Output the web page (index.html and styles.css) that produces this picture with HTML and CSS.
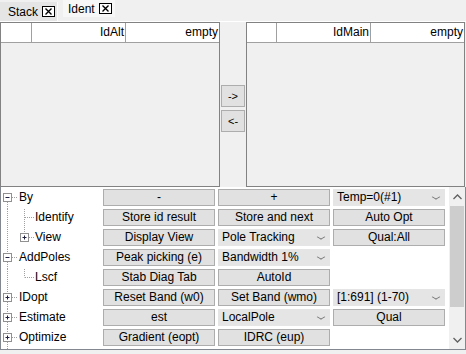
FILE: index.html
```html
<!DOCTYPE html>
<html lang="en">
<head>
  <meta charset="UTF-8">
  <title>Ident</title>
  <link rel="stylesheet" href="styles.css">
</head>
<body>
  <div class="tabs">
    <div class="tab stack">Stack
      <svg class="close" width="13" height="11" viewBox="0 0 13 11"><rect x="0.5" y="0.5" width="12" height="10" fill="#fff" stroke="#000"/><path d="M3.5 2.5 L9.5 8.5 M9.5 2.5 L3.5 8.5" stroke="#000" stroke-width="1.4"/></svg>
    </div>
    <div class="tab active">Ident
      <svg class="close" width="13" height="11" viewBox="0 0 13 11"><rect x="0.5" y="0.5" width="12" height="10" fill="#fff" stroke="#000"/><path d="M3.5 2.5 L9.5 8.5 M9.5 2.5 L3.5 8.5" stroke="#000" stroke-width="1.4"/></svg>
    </div>
  </div>

  <div class="lists">
    <div class="grid left">
      <div class="head">
        <div class="c0"></div>
        <div class="c1">IdAlt</div>
        <div class="c2">empty</div>
      </div>
    </div>
    <div class="mover">
      <button class="mv">-&gt;</button>
      <button class="mv">&lt;-</button>
    </div>
    <div class="grid right">
      <div class="head">
        <div class="c0"></div>
        <div class="c1">IdMain</div>
        <div class="c2">empty</div>
      </div>
    </div>
  </div>

  <div class="panel">
    <div class="rows">
      <!-- By -->
      <div class="node">
        <svg width="99" height="20"><g class="dots"><path d="M6.5 13V20 M11 8.5H17"/></g><rect x="2.5" y="4.5" width="8" height="8"/><path class="sign" d="M4.5 8.5H8.5"/></svg>
        <span class="lbl">By</span>
      </div>
      <div class="btn">-</div>
      <div class="btn">+</div>
      <div class="combo">Temp=0(#1)<i></i></div>

      <!-- Identify -->
      <div class="node">
        <svg width="99" height="20"><g class="dots"><path d="M6.5 0V20 M23.5 0V20 M24 8.5H33"/></g></svg>
        <span class="lbl sub">Identify</span>
      </div>
      <div class="btn">Store id result</div>
      <div class="btn">Store and next</div>
      <div class="btn">Auto Opt</div>

      <!-- View -->
      <div class="node">
        <svg width="99" height="20"><g class="dots"><path d="M6.5 0V20 M23.5 0V4 M28 8.5H33"/></g><rect x="19.5" y="4.5" width="8" height="8"/><path class="sign" d="M21.5 8.5H25.5 M23.5 6.5V10.5"/></svg>
        <span class="lbl sub">View</span>
      </div>
      <div class="btn">Display View</div>
      <div class="combo">Pole Tracking<i></i></div>
      <div class="btn">Qual:All</div>

      <!-- AddPoles -->
      <div class="node">
        <svg width="99" height="20"><g class="dots"><path d="M6.5 0V4 M6.5 13V20 M11 8.5H17"/></g><rect x="2.5" y="4.5" width="8" height="8"/><path class="sign" d="M4.5 8.5H8.5"/></svg>
        <span class="lbl">AddPoles</span>
      </div>
      <div class="btn">Peak picking (e)</div>
      <div class="combo">Bandwidth 1%<i></i></div>
      <div></div>

      <!-- Lscf -->
      <div class="node">
        <svg width="99" height="20"><g class="dots"><path d="M6.5 0V20 M23.5 0V8.5 M24 8.5H33"/></g></svg>
        <span class="lbl sub">Lscf</span>
      </div>
      <div class="btn">Stab Diag Tab</div>
      <div class="btn">AutoId</div>
      <div></div>

      <!-- IDopt -->
      <div class="node">
        <svg width="99" height="20"><g class="dots"><path d="M6.5 0V4 M6.5 13V20 M11 8.5H17"/></g><rect x="2.5" y="4.5" width="8" height="8"/><path class="sign" d="M4.5 8.5H8.5 M6.5 6.5V10.5"/></svg>
        <span class="lbl">IDopt</span>
      </div>
      <div class="btn">Reset Band (w0)</div>
      <div class="btn">Set Band (wmo)</div>
      <div class="combo">[1:691] (1-70)<i></i></div>

      <!-- Estimate -->
      <div class="node">
        <svg width="99" height="20"><g class="dots"><path d="M6.5 0V4 M6.5 13V20 M11 8.5H17"/></g><rect x="2.5" y="4.5" width="8" height="8"/><path class="sign" d="M4.5 8.5H8.5 M6.5 6.5V10.5"/></svg>
        <span class="lbl">Estimate</span>
      </div>
      <div class="btn">est</div>
      <div class="combo">LocalPole<i></i></div>
      <div class="btn">Qual</div>

      <!-- Optimize -->
      <div class="node">
        <svg width="99" height="20"><g class="dots"><path d="M6.5 0V4 M6.5 13V20 M11 8.5H17"/></g><rect x="2.5" y="4.5" width="8" height="8"/><path class="sign" d="M4.5 8.5H8.5 M6.5 6.5V10.5"/></svg>
        <span class="lbl">Optimize</span>
      </div>
      <div class="btn">Gradient (eopt)</div>
      <div class="btn">IDRC (eup)</div>
      <div></div>
    </div>

    <div class="vscroll">
      <div class="arrow"><svg width="9" height="6"><path d="M0.5 5L4.5 1L8.5 5" fill="none" stroke="#606060" stroke-width="1.3"/></svg></div>
      <div class="track"><div class="thumb"></div></div>
      <div class="arrow"><svg width="9" height="6"><path d="M0.5 1L4.5 5L8.5 1" fill="none" stroke="#606060" stroke-width="1.3"/></svg></div>
    </div>
  </div>
</body>
</html>
```

FILE: styles.css
```css
* {
  box-sizing: border-box;
}
body {
  margin: 0;
  width: 466px;
  height: 354px;
  overflow: hidden;
  background: #f0f0f0;
  font-family: "Liberation Sans", Arial, sans-serif;
  font-size: 12px;
  color: #000;
}

/* tab strip */
.tabs {
  display: flex;
  align-items: flex-start;
  height: 22px;
  border-bottom: 1px solid #fff;
}
.tab {
  display: flex;
  align-items: center;
  gap: 4px;
}
.tab.stack {
  margin-top: 2px;
  height: 19px;
  width: 58px;
  padding-left: 8px;
  background: #e5e5e5;
  border-right: 1px solid #fafafa;
}
.tab.active {
  margin-left: 5px;
  height: 17px;
  width: 52px;
  padding-left: 5px;
  background: #f7f7f7;
}
.close {
  display: block;
}

/* the two lists */
.lists {
  display: flex;
  height: 165px;
}
.grid {
  border: 1px solid #828282;
  background: #f0f0f0;
}
.grid.left {
  width: 220px;
}
.grid.right {
  width: 219px;
}
.head {
  display: flex;
  height: 20px;
  background: #fff;
  border-bottom: 1px solid #a0a0a0;
}
.head div {
  text-align: right;
  padding-right: 1px;
  line-height: 19px;
  border-right: 1px solid #a0a0a0;
}
.grid.left .c0 { width: 31px; }
.grid.right .c0 { width: 30px; }
.head .c1 { width: 94px; }
.head .c2 { flex: 1; border-right: none; }

.mover {
  width: 26px;
  padding: 63px 0 0 1px;
  display: flex;
  flex-direction: column;
  gap: 3px;
}
.mv {
  width: 24px;
  height: 22px;
  padding: 0;
  background: #e1e1e1;
  border: 1px solid #adadad;
  font-family: "Liberation Sans", Arial, sans-serif;
  font-size: 11px;
  color: #000;
}

/* bottom tree panel */
.panel {
  display: flex;
  height: 163px;
  background: #fff;
  border: 1px solid #828790;
  border-top: none;
  overflow: hidden;
}
.rows {
  width: 448px;
  padding-top: 2px;
  display: grid;
  grid-template-columns: 99px 112px 112px 112px;
  grid-auto-rows: 20px;
  column-gap: 3px;
}
.node {
  display: grid;
}
.node svg,
.node .lbl {
  grid-area: 1 / 1;
}
.node rect {
  fill: #fff;
  stroke: #919191;
}
.dots path {
  fill: none;
  stroke: #a0a0a0;
  stroke-dasharray: 1 1;
}
.sign {
  stroke: #202040;
}
.lbl {
  padding-left: 18px;
  line-height: 17px;
}
.lbl.sub {
  padding-left: 34px;
}
.btn {
  height: 17px;
  line-height: 15px;
  text-align: center;
  background: #e1e1e1;
  border: 1px solid #adadad;
  white-space: nowrap;
}
.combo {
  height: 17px;
  line-height: 17px;
  padding-left: 4px;
  background: #e5e5e5;
  position: relative;
  white-space: nowrap;
}
.combo i {
  position: absolute;
  right: 6px;
  top: 5px;
  width: 6px;
  height: 6px;
  border-right: 1px solid #707070;
  border-bottom: 1px solid #707070;
  transform: scale(1, 0.6) rotate(45deg);
}

.vscroll {
  width: 16px;
  display: flex;
  flex-direction: column;
  background: #f0f0f0;
}
.arrow {
  height: 19px;
  display: flex;
  align-items: center;
  justify-content: center;
}
.track {
  flex: 1;
  padding: 0 1px;
}
.thumb {
  height: 101px;
  background: #cdcdcd;
}
```
